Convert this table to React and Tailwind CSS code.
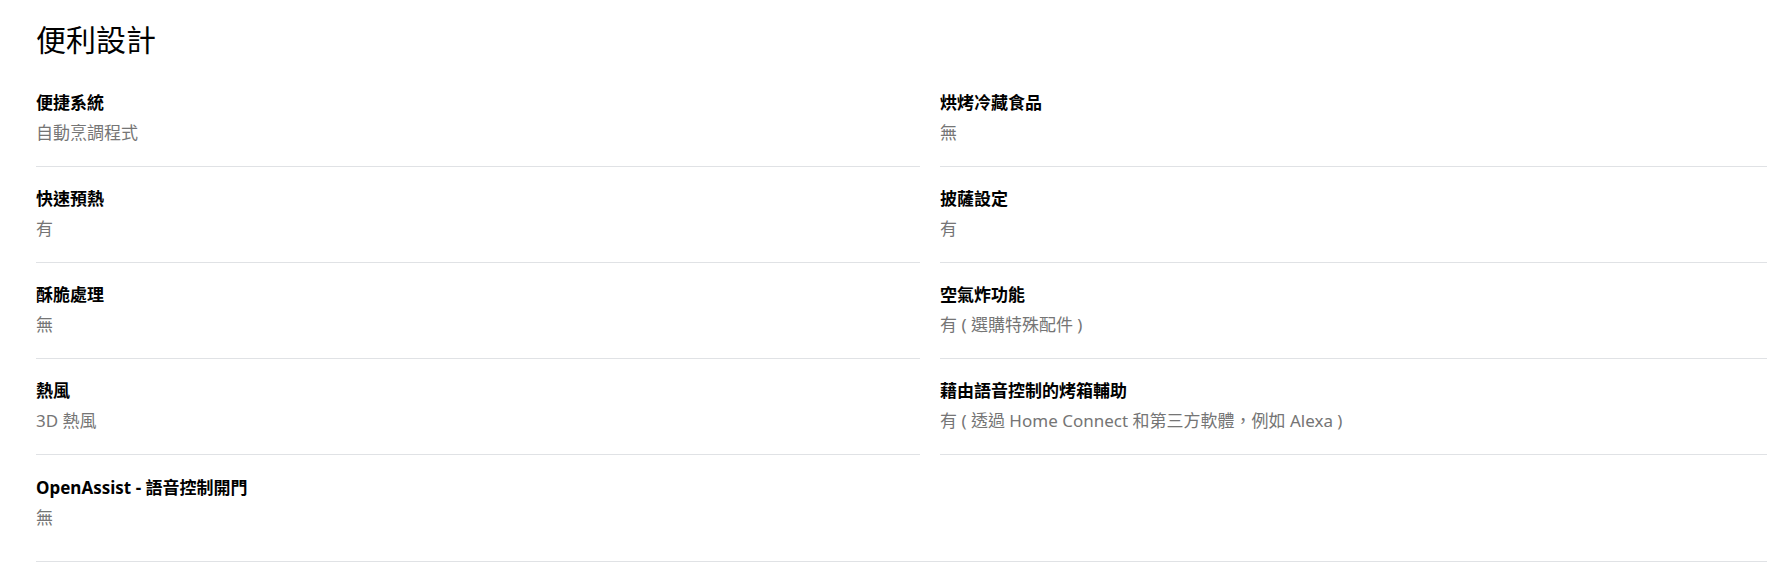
import React from 'react';

const leftItems = [
    { label: '便捷系統', value: '自動烹調程式' },
    { label: '快速預熱', value: '有' },
    { label: '酥脆處理', value: '無' },
    { label: '熱風', value: '3D 熱風' },
    { label: 'OpenAssist - 語音控制開門', value: '無', last: true },
];

const rightItems = [
    { label: '烘烤冷藏食品', value: '無' },
    { label: '披薩設定', value: '有' },
    { label: '空氣炸功能', value: '有 ( 選購特殊配件 )' },
    { label: '藉由語音控制的烤箱輔助', value: '有 ( 透過 Home Connect 和第三方軟體，例如 Alexa )' },
];

const SpecRow = ({ label, value, first, last }) => {
    let spacing = 'pt-[20px] pb-[21px] border-b border-[#e0e2e5]';
    if (first) spacing = 'pt-0 pb-[21px] border-b border-[#e0e2e5]';
    if (last) spacing = 'pt-[21px] pb-[31px]';
    return (
        <div className={spacing}>
            <div className="text-[17px] leading-[24px] font-bold text-black">{label}</div>
            <div className="mt-[6px] text-[17px] leading-[24px] text-[#757575]">{value}</div>
        </div>
    );
};

const App = () => {
    return (
        <div
            className="w-full h-[582px] overflow-hidden bg-white px-[36px] pt-[21px]"
            style={{ fontFamily: '"Noto Sans", "Noto Sans CJK TC", sans-serif' }}
        >
            {/* Header */}
            <h1 className="text-[30px] leading-[38px] font-normal text-black mb-[32px]">便利設計</h1>

            {/* Spec columns, bottom rule runs across both */}
            <div className="w-[1788px] grid grid-cols-[884px_884px] gap-x-[20px] items-start border-b border-[#e0e2e5]">
                <div className="flex flex-col">
                    {leftItems.map((item, i) => (
                        <SpecRow key={item.label} {...item} first={i === 0} />
                    ))}
                </div>
                <div className="flex flex-col">
                    {rightItems.map((item, i) => (
                        <SpecRow key={item.label} {...item} first={i === 0} />
                    ))}
                </div>
            </div>
        </div>
    );
};

export default App;
